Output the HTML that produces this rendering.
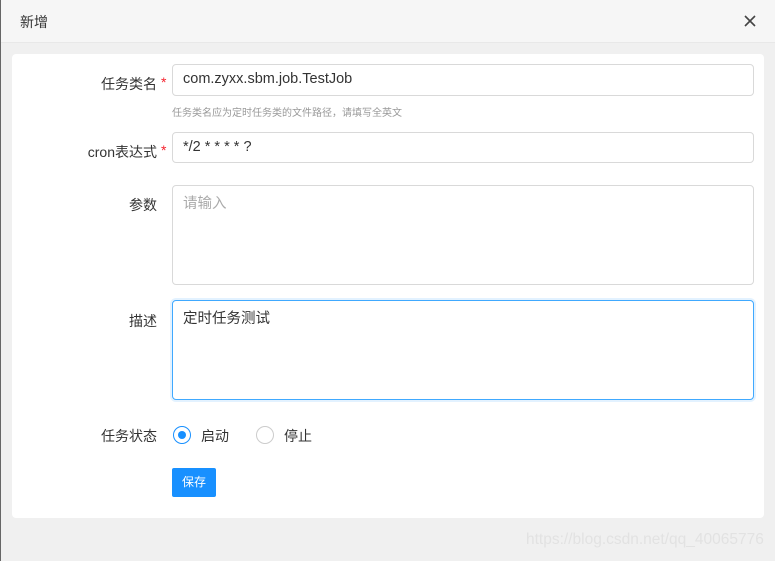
<!DOCTYPE html>
<html><head><meta charset="utf-8"><style>
body{margin:0;width:775px;height:561px;background:#f0f0f0;font-family:"Liberation Sans","Noto Sans CJK SC",sans-serif;position:relative;overflow:hidden}
.edge{position:absolute;left:0;top:0;width:1px;height:561px;background:#666}
.hd{position:absolute;left:0;top:0;width:775px;height:42px;background:#f6f6f6;border-bottom:1px solid #e8e8e8}
.hd span{position:absolute;left:20px;top:12px;font-size:14px;color:#333}
.x{position:absolute;left:743px;top:14px;width:14px;height:14px}
.card{position:absolute;left:12px;top:54px;width:752px;height:464px;background:#fff;border-radius:4px}
.lab{position:absolute;right:618px;font-size:14px;color:#333;text-align:right;white-space:nowrap}
.lab i{color:#f5222d;font-style:normal;position:absolute;left:100%;margin-left:4px}
.in{position:absolute;left:172px;width:582px;border:1px solid #d9d9d9;border-radius:4px;box-sizing:border-box;background:#fff;font-size:14.5px;color:#333;padding:6px 10px}
.hint{position:absolute;left:172px;top:104px;font-size:10px;color:#999}
.rad{position:absolute;top:426px;width:18px;height:18px;border-radius:50%;box-sizing:border-box}
.rt{position:absolute;top:426px;font-size:14px;color:#333}
.btn{position:absolute;left:172px;top:468px;width:44px;height:29px;background:#1890ff;border-radius:2px;color:#fff;font-size:12px;text-align:center;line-height:29px}
.wm{position:absolute;left:526px;top:531px;font-size:15.5px;color:#e2e2e2}
</style></head><body>
<div class="hd"><span>新增</span>
<svg class="x" viewBox="0 0 14 14"><path d="M2 2L12 12M12 2L2 12" stroke="#444" stroke-width="1.6"/></svg></div>
<div class="edge"></div>
<div class="card"></div>
<div class="lab" style="top:74px">任务类名<i>*</i></div>
<div class="in" style="top:64px;height:32px">com.zyxx.sbm.job.TestJob</div>
<div class="hint">任务类名应为定时任务类的文件路径，请填写全英文</div>
<div class="lab" style="top:142px">cron表达式<i>*</i></div>
<div class="in" style="top:132px;height:31px">*/2 * * * * ?</div>
<div class="lab" style="top:195px">参数</div>
<div class="in" style="top:185px;height:100px;color:#aaa">请输入</div>
<div class="lab" style="top:311px">描述</div>
<div class="in" style="top:300px;height:100px;border-color:#40a9ff;box-shadow:0 0 0 2px rgba(24,144,255,.12)">定时任务测试</div>
<div class="lab" style="top:426px">任务状态</div>
<div class="rad" style="left:173px;border:1px solid #1890ff"><div style="position:absolute;left:4px;top:4px;width:8px;height:8px;border-radius:50%;background:#1890ff"></div></div>
<div class="rt" style="left:201px">启动</div>
<div class="rad" style="left:256px;border:1px solid #ccc"></div>
<div class="rt" style="left:284px">停止</div>
<div class="btn">保存</div>
<div class="wm">https://blog.csdn.net/qq_40065776</div>
</body></html>
